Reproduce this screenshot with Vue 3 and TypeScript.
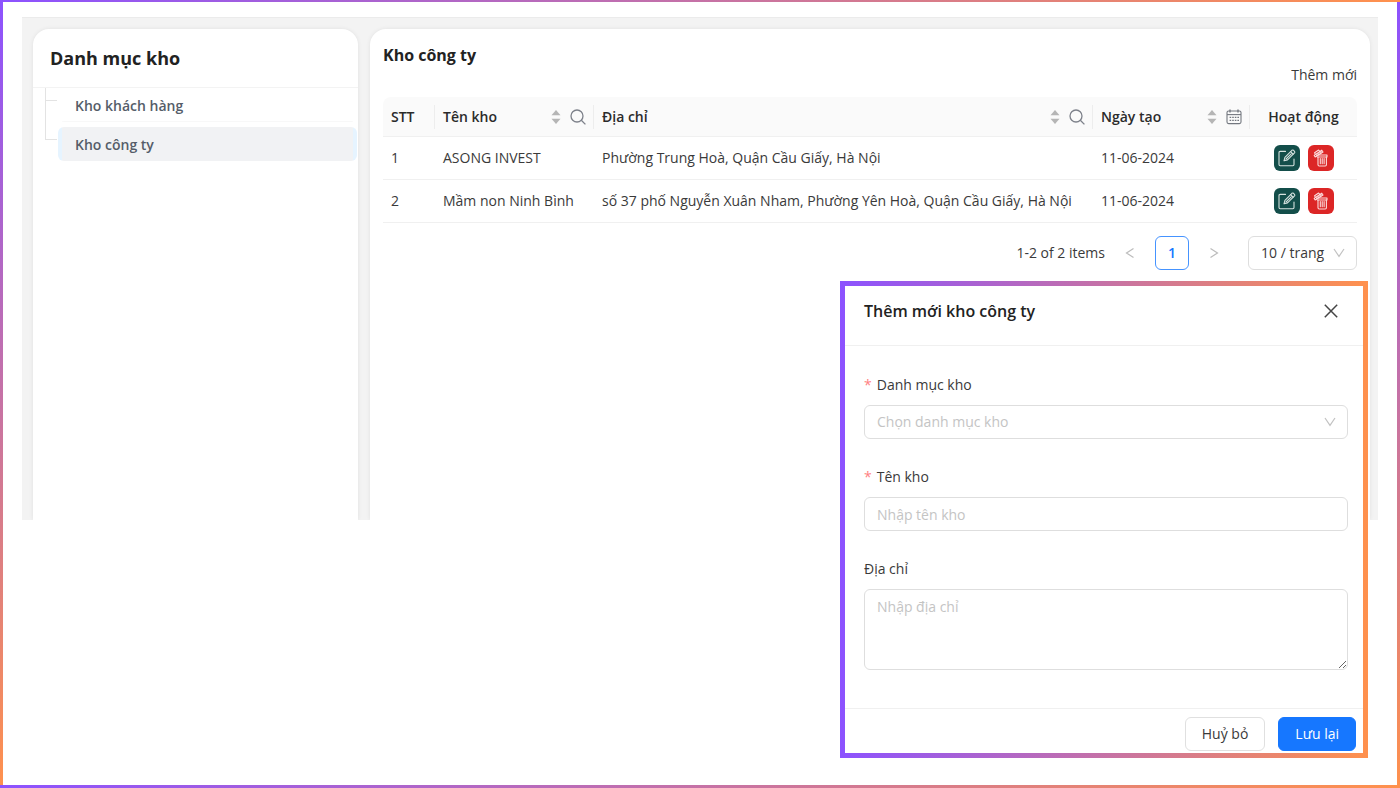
<script setup lang="ts">
import { ref } from 'vue'

interface Warehouse {
  id: number
  name: string
  address: string
  created: string
}

const categories = ['Kho khách hàng', 'Kho công ty']
const selected = ref('Kho công ty')

const rows: Warehouse[] = [
  { id: 1, name: 'ASONG INVEST', address: 'Phường Trung Hoà, Quận Cầu Giấy, Hà Nội', created: '11-06-2024' },
  { id: 2, name: 'Mầm non Ninh Bình', address: 'số 37 phố Nguyễn Xuân Nham, Phường Yên Hoà, Quận Cầu Giấy, Hà Nội', created: '11-06-2024' },
]

const columns = [
  { key: 'name', label: 'Tên kho', icon: 'search' },
  { key: 'address', label: 'Địa chỉ', icon: 'search' },
  { key: 'created', label: 'Ngày tạo', icon: 'calendar' },
]

const pageSize = ref('10')
const form = ref({ category: '', name: '', address: '' })
</script>

<template>
  <div class="page">
    <main class="workspace">
      <aside class="card sidebar">
        <h2 class="sidebar-title">Danh mục kho</h2>
        <ul class="tree">
          <li v-for="item in categories" :key="item" class="tree-item">
            <button type="button" class="node" :class="{ active: item === selected }" @click="selected = item">
              {{ item }}
            </button>
          </li>
        </ul>
      </aside>

      <section class="card content">
        <h1 class="content-title">Kho công ty</h1>
        <div class="toolbar">
          <button type="button" class="add">Thêm mới</button>
        </div>

        <table class="table">
          <colgroup>
            <col class="c-index" />
            <col class="c-name" />
            <col />
            <col class="c-date" />
            <col class="c-action" />
          </colgroup>
          <thead>
            <tr>
              <th scope="col">STT</th>
              <th v-for="col in columns" :key="col.key" scope="col">
                <div class="head">
                  <span class="head-label">{{ col.label }}</span>
                  <button type="button" class="icon-button" :aria-label="'Sắp xếp ' + col.label">
                    <svg width="10" height="16" viewBox="0 0 10 16" fill="#b5b5b5">
                      <path d="M5 1 9.5 6.2H.5Z" />
                      <path d="M5 15 9.5 9.8H.5Z" />
                    </svg>
                  </button>
                  <button type="button" class="icon-button" :aria-label="'Lọc ' + col.label">
                    <svg v-if="col.icon === 'search'" width="16" height="16" viewBox="0 0 16 16" fill="none" stroke="#7d818a" stroke-width="1.3">
                      <circle cx="7" cy="7" r="6" />
                      <path d="m11.3 11.3 4.1 4.1" />
                    </svg>
                    <svg v-else width="16" height="16" viewBox="0 0 16 16" fill="none" stroke="#73777f" stroke-width="1.1">
                      <rect x="1" y="2" width="14" height="12.6" rx="1.6" />
                      <path d="M1 5.6h14" />
                      <path d="M4 .4v3M12 .4v3" stroke-width="1.4" />
                      <path d="M3.6 8.4h9.4M3.6 11.4h9.4" stroke-width="1.4" stroke-dasharray="1.6 1" />
                    </svg>
                  </button>
                </div>
              </th>
              <th scope="col" class="center">Hoạt động</th>
            </tr>
          </thead>
          <tbody>
            <tr v-for="row in rows" :key="row.id">
              <td>{{ row.id }}</td>
              <td>{{ row.name }}</td>
              <td>{{ row.address }}</td>
              <td>{{ row.created }}</td>
              <td>
                <div class="actions">
                  <button type="button" class="action edit" aria-label="Sửa">
                    <svg width="18" height="18" viewBox="0 0 18 18" fill="none" stroke="#d6e2df" stroke-width="1.1" stroke-linejoin="round" stroke-linecap="round">
                      <path d="M7.5 2.4H2.2Q1 2.4 1 3.6v12q0 1.2 1.2 1.2h12.6q1.2 0 1.2-1.2V10" />
                      <path d="m6 11.8.9-3.5 7-7q.8-.6 1.6 0l1 1q.7.8 0 1.6l-7 7Z" />
                      <path d="m12.6 2.6 2.5 2.5M8 10l5.2-5.2" />
                    </svg>
                  </button>
                  <button type="button" class="action remove" aria-label="Xoá">
                    <svg width="16" height="18" viewBox="0 0 16 18" fill="none" stroke="#fbdcdc" stroke-width="1.1" stroke-linejoin="round" stroke-linecap="round">
                      <path d="M5 6h9v2H4.4" />
                      <path d="M5 8v7.8q0 1.2 1.2 1.2h6q1.2 0 1.2-1.2V8" />
                      <path d="M7.3 9.6v5.2M9.2 9.6v5.2M11.1 9.6v5.2" />
                      <path d="M2.2 8 1.2 6.4 8.8 1.2l1.2 1.8Z" />
                      <path d="M2.4 5.4 1.6 3.8 5.6 1l1.2 1.4M3.6 7l.6-2.6M5.6 5.8l.6-2.8M7.6 4.6l.4-2.6" />
                    </svg>
                  </button>
                </div>
              </td>
            </tr>
          </tbody>
        </table>

        <nav class="pagination" aria-label="Phân trang">
          <span class="total">1-2 of 2 items</span>
          <button type="button" class="arrow" aria-label="Trang trước">
            <svg width="10" height="12" viewBox="0 0 10 12" fill="none" stroke="#bcbcbc" stroke-width="1.2"><path d="M8.5 1.5 1.5 6l7 4.5" /></svg>
          </button>
          <button type="button" class="current" aria-current="page">1</button>
          <button type="button" class="arrow" aria-label="Trang sau">
            <svg width="10" height="12" viewBox="0 0 10 12" fill="none" stroke="#bcbcbc" stroke-width="1.2"><path d="m1.5 1.5 7 4.5-7 4.5" /></svg>
          </button>
          <div class="select-wrap size">
            <select v-model="pageSize" class="control" aria-label="Số dòng mỗi trang">
              <option value="10">10 / trang</option>
              <option value="20">20 / trang</option>
            </select>
            <svg class="chevron" width="12" height="10" viewBox="0 0 12 10" fill="none" stroke="#c2c2c2" stroke-width="1.2"><path d="M1 1 6 8.4 11 1" /></svg>
          </div>
        </nav>
      </section>
    </main>

    <form class="dialog" role="dialog" aria-labelledby="dialog-title" @submit.prevent>
      <header class="dialog-header">
        <h2 id="dialog-title" class="dialog-title">Thêm mới kho công ty</h2>
        <button type="button" class="icon-button" aria-label="Đóng">
          <svg width="14" height="14" viewBox="0 0 14 14" fill="none" stroke="#444" stroke-width="1.5"><path d="m.8.8 12.4 12.4M13.2.8.8 13.2" /></svg>
        </button>
      </header>

      <div class="dialog-body">
        <div class="field">
          <label for="category" class="required">Danh mục kho</label>
          <div class="select-wrap">
            <select id="category" v-model="form.category" class="control" :class="{ empty: !form.category }" required>
              <option value="" disabled hidden>Chọn danh mục kho</option>
              <option v-for="item in categories" :key="item" :value="item">{{ item }}</option>
            </select>
            <svg class="chevron" width="12" height="10" viewBox="0 0 12 10" fill="none" stroke="#c2c2c2" stroke-width="1.2"><path d="M1 1 6 8.4 11 1" /></svg>
          </div>
        </div>
        <div class="field">
          <label for="name" class="required">Tên kho</label>
          <input id="name" v-model="form.name" type="text" class="control" placeholder="Nhập tên kho" required />
        </div>
        <div class="field">
          <label for="address">Địa chỉ</label>
          <textarea id="address" v-model="form.address" class="control area" placeholder="Nhập địa chỉ"></textarea>
        </div>
      </div>

      <footer class="dialog-footer">
        <button type="button" class="button">Huỷ bỏ</button>
        <button type="submit" class="button primary">Lưu lại</button>
      </footer>
    </form>
  </div>
</template>

<style>
body {
  margin: 0;
  background: #fff;
}
</style>

<style scoped>
.page,
.page * {
  box-sizing: border-box;
}

.page {
  position: relative;
  min-height: 100vh;
  padding: 17px 22px 27px;
  font-family: "Open Sans", "Noto Sans", sans-serif;
  font-size: 14px;
  line-height: 22px;
  color: #3a3a3a;
  background:
    linear-gradient(90deg, #8c52ff, #ff914d) top / 100% 2px no-repeat,
    linear-gradient(90deg, #8c52ff, #ff914d) bottom / 100% 3px no-repeat,
    linear-gradient(180deg, #8c52ff, #ff914d) left / 3px 100% no-repeat,
    linear-gradient(180deg, #8c52ff, #ff914d) right / 3px 100% no-repeat,
    #fff;
}

button,
input,
select,
textarea {
  font: inherit;
  color: inherit;
}

h1,
h2 {
  margin: 0;
  font-weight: 600;
  color: #222;
}

.workspace {
  display: grid;
  grid-template-columns: 325px minmax(0, 1fr);
  gap: 12px;
  min-height: 503px;
  padding: 11px 8px 0 11px;
  background: #f3f3f3;
  border-top: 1px solid #ebebeb;
  overflow: hidden;
}

.card {
  background: #fff;
  border-radius: 16px 16px 0 0;
  box-shadow: 0 0 4px rgba(0, 0, 0, 0.08);
}

.sidebar-title {
  padding: 15px 17px;
  border-bottom: 1px solid #f3f3f3;
  font-size: 18px;
  line-height: 28px;
  font-weight: 700;
}

.tree {
  margin: 0;
  padding: 0 1px 0 25px;
  list-style: none;
}

.tree-item {
  position: relative;
  padding-bottom: 5px;
}

.tree-item::before,
.tree-item::after {
  content: "";
  position: absolute;
  top: 0;
  left: -13px;
  border: 0 solid #e3e3e3;
}

.tree-item::before {
  width: 11px;
  height: 12px;
  border-width: 0 0 1px 1px;
}

.tree-item::after {
  height: 100%;
  border-left-width: 1px;
}

.tree-item:last-child::after {
  content: none;
}

.node {
  display: block;
  width: 100%;
  height: 34px;
  padding: 1px 17px 0;
  border: 0;
  border-radius: 6px;
  background: linear-gradient(#f8f8f8, #f8f8f8) bottom / calc(100% - 8px) 1px no-repeat;
  text-align: left;
  font-weight: 600;
  color: #555d69;
}

.node.active {
  background: linear-gradient(#f1f2f4, #f1f2f4) center / calc(100% - 8px) 100% no-repeat #e6f4ff;
}

.content {
  padding: 15px 13px;
}

.content-title {
  font-size: 16px;
  font-weight: 700;
}

.toolbar {
  display: flex;
  justify-content: flex-end;
  margin: -2px 0 11px;
}

.add {
  padding: 0;
  border: 0;
  background: none;
}

.table {
  width: 100%;
  table-layout: fixed;
  border-collapse: separate;
  border-spacing: 0;
}

.c-index {
  width: 52px;
}

.c-name {
  width: 159px;
}

.c-date {
  width: 157px;
}

.c-action {
  width: 107px;
}

th,
td {
  padding: 0 8px;
  border-bottom: 1px solid #f0f0f0;
  text-align: left;
  white-space: nowrap;
}

th {
  height: 40px;
  background: linear-gradient(#ededed, #ededed) right / 1px 24px no-repeat #fafafa;
  font-weight: 600;
  color: #2b2b2b;
}

th:first-child {
  border-top-left-radius: 8px;
}

th:last-child {
  border-top-right-radius: 8px;
  background: #fafafa;
}

td {
  height: 43px;
}

.center {
  text-align: center;
}

.head {
  display: flex;
  align-items: center;
  gap: 9px;
}

.head-label {
  flex: 1;
}

.icon-button {
  display: flex;
  padding: 0;
  border: 0;
  background: none;
}

.actions {
  display: flex;
  justify-content: center;
  gap: 8px;
}

.action {
  display: flex;
  align-items: center;
  justify-content: center;
  width: 26px;
  height: 26px;
  padding: 0;
  border: 0;
  border-radius: 6px;
}

.edit {
  background: #134e4a;
}

.remove {
  background: #dc2626;
}

.pagination {
  display: flex;
  align-items: center;
  justify-content: flex-end;
  margin-top: 13px;
}

.arrow {
  display: flex;
  align-items: center;
  justify-content: center;
  width: 50px;
  height: 34px;
  padding: 0;
  border: 0;
  background: none;
}

.current {
  width: 34px;
  height: 34px;
  padding: 0;
  border: 1px solid #4593ff;
  border-radius: 6px;
  background: #fff;
  font-weight: 600;
  color: #1677ff;
}

.size {
  width: 109px;
  margin-left: 9px;
}

.select-wrap {
  position: relative;
}

.chevron {
  position: absolute;
  top: 12px;
  right: 12px;
  pointer-events: none;
}

.control {
  display: block;
  width: 100%;
  height: 34px;
  margin: 0;
  padding: 0 12px;
  border: 1px solid #dedede;
  border-radius: 6px;
  background: #fff;
  appearance: none;
  outline: none;
}

.control.empty,
.control::placeholder {
  color: #c4c4c4;
}

.area {
  height: 81px;
  padding: 6px 12px;
  resize: vertical;
}

.dialog {
  position: absolute;
  top: 281px;
  right: 32px;
  width: 528px;
  border: 5px solid;
  border-image: linear-gradient(90deg, #8c52ff, #ff914d) 5;
  background: #fff;
}

.dialog-header {
  display: flex;
  align-items: center;
  justify-content: space-between;
  padding: 13px 25px 22px 19px;
  border-bottom: 1px solid #f0f0f0;
}

.dialog-title {
  font-size: 16px;
  line-height: 24px;
}

.dialog-body {
  display: grid;
  gap: 27px;
  padding: 28px 15px 38px 19px;
}

.field label {
  display: block;
  margin-bottom: 9px;
}

.required::before {
  content: "*";
  margin-right: 5px;
  color: #ff7f82;
}

.dialog-footer {
  display: flex;
  justify-content: flex-end;
  gap: 13px;
  padding: 8px 7px 2px;
  border-top: 1px solid #f0f0f0;
}

.button {
  height: 34px;
  padding: 0 16px;
  border: 1px solid #e0e0e0;
  border-radius: 6px;
  background: #fff;
}

.primary {
  border-color: #1677ff;
  background: #1677ff;
  color: #fff;
}
</style>
